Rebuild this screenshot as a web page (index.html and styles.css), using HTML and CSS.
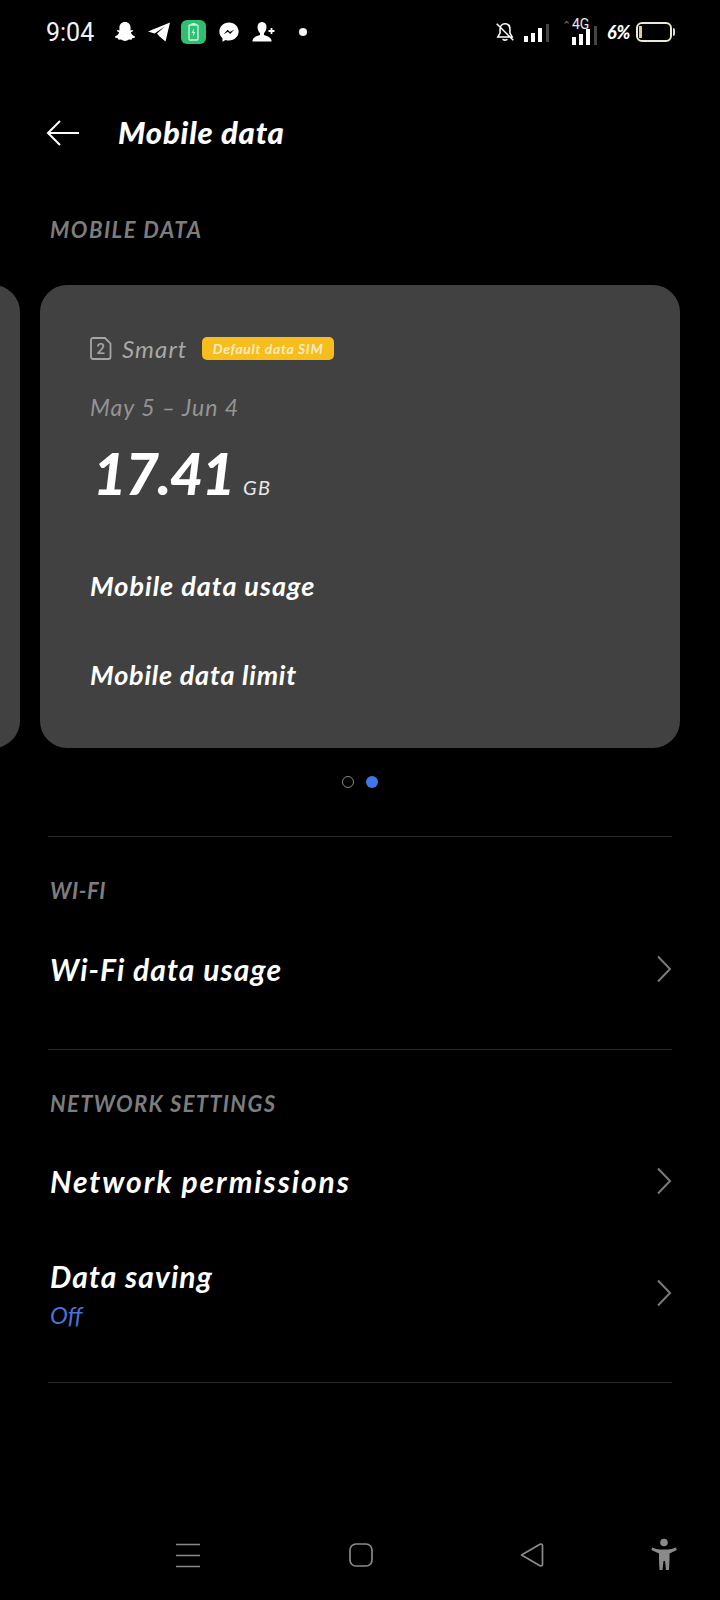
FILE: index.html
```html
<!DOCTYPE html>
<html lang="en">
<head>
<meta charset="utf-8">
<title>Mobile data</title>
<link rel="stylesheet" href="styles.css">
</head>
<body>
<div class="screen">
  <div class="status">
    <div class="status-left">
      <span class="time">9:04</span>
      <svg class="si s-snap" viewBox="0 0 24 24"><path d="M12 2c3.600 0 5.600 2.600 5.600 5.800v2.600l2-.4.6 1-2.400 1.500c.8 2 2.200 3.300 4.200 4l-.3 1.200-2.500.5-.7 1.500-2.500-.2c-1.500.4-2.500 1.500-4 1.500s-2.500-1.100-4-1.500l-2.500.2-.7-1.500-2.500-.5-.3-1.200c2-.7 3.400-2 4.200-4l-2.400-1.500.6-1 2 .4V7.800C6.400 4.600 8.400 2 12 2z" fill="#fff"/></svg>
      <svg class="si s-tele" viewBox="0 0 24 24"><path d="M1 11.500 23 2.500 18.500 21.500 12.500 16.500 10 13.500 18 6.500 7.500 13.500z" fill="#fff"/></svg>
      <span class="bat-app"><svg viewBox="0 0 24 24"><rect x="7.500" y="5" width="9" height="15" rx="1" fill="none" stroke="#cdf5e2" stroke-width="1.300"/><rect x="10" y="3" width="4" height="2" fill="#cdf5e2"/><path d="M12.800 8 10 13h2l-.8 4 2.800-5h-2z" fill="#cdf5e2"/></svg></span>
      <svg class="si s-mess" viewBox="0 0 24 24"><path d="M12 1.500C6 1.500 1.500 5.900 1.500 11.500c0 3 1.300 5.500 3.400 7.300V22.500l3.400-1.900c1.200.4 2.400.6 3.700.6 6 0 10.500-4.300 10.500-9.700S18 1.500 12 1.500z" fill="#fff"/><path d="M6 14.500 10.500 9.500 13 12l4.800-2.800-4.500 5-2.500-2.500z" fill="#000"/></svg>
      <svg class="si s-user" viewBox="0 0 26 24"><path d="M10.500 2c3 0 4.500 2.200 4.500 5 0 2.500-1 4.800-2.500 6v2c2.500 1 7 2 7.500 5.500v1H1v-1C1.500 17 6 16 8.500 15v-2C7 11.800 6 9.500 6 7c0-2.800 1.500-5 4.500-5z" fill="#fff"/><path d="M20 8v6M17 11h6" stroke="#fff" stroke-width="1.800"/></svg>
      <span class="dot"></span>
    </div>
    <div class="status-right">
      <svg class="s-bell" viewBox="0 0 20 20"><path d="M10 2.500c-3 0-4.500 2.300-4.500 5v3.500L3.500 14.500h13L14.500 11V7.500c0-2.700-1.500-5-4.500-5z M8 16.500c.5 1.200 3.500 1.200 4 0 M2.500 2.500l15 15" fill="none" stroke="#fff" stroke-width="1.400"/></svg>
      <svg class="s-sig" viewBox="0 0 30 20"><g fill="#fff"><rect x="2" y="13" width="4" height="6"/><rect x="9" y="10" width="4" height="9"/><rect x="16" y="5" width="4" height="14"/></g><rect x="24" y="1" width="3" height="18" fill="#444"/></svg>
      <span class="net"><span class="net-4g"><span class="net-arrows">⌃</span>4G</span>
        <svg class="s-sig2" viewBox="0 0 30 20"><g fill="#fff"><rect x="2" y="11" width="4" height="8"/><rect x="9" y="8" width="4" height="11"/><rect x="16" y="3" width="4" height="16"/></g><rect x="24" y="0" width="3" height="19" fill="#444"/></svg>
      </span>
      <span class="pct">6%</span>
      <span class="battery"><span class="bat-level"></span></span><span class="bat-tip"></span>
    </div>
  </div>

  <div class="appbar">
    <svg class="back" viewBox="0 0 34 28"><path d="M33 14H2M14 2 2 14l12 12" fill="none" stroke="#fff" stroke-width="2"/></svg>
    <h1 class="title">Mobile data</h1>
  </div>

  <div class="label label-first">MOBILE DATA</div>

  <div class="carousel">
    <div class="peek"></div>
    <div class="card">
      <div class="sim-row">
        <svg class="sim" viewBox="0 0 22 24"><path d="M3 1.500h12L20.500 7v13.500a2 2 0 0 1-2 2H3a2 2 0 0 1-2-2v-17a2 2 0 0 1 2-2z" fill="none" stroke="#a5a5a5" stroke-width="1.800"/><text x="10.800" y="17.500" text-anchor="middle" class="sim-n">2</text></svg>
        <span class="sim-name">Smart</span>
        <span class="badge">Default data SIM</span>
      </div>
      <div class="dates">May 5 – Jun 4</div>
      <div class="usage"><span class="amount">17.41</span><span class="unit">GB</span></div>
      <div class="card-link link-one">Mobile data usage</div>
      <div class="card-link link-two">Mobile data limit</div>
    </div>
  </div>

  <div class="dots"><span class="pg"></span><span class="pg pg-on"></span></div>

  <div class="rule rule-a"></div>
  <div class="label label-wifi">WI-FI</div>
  <div class="row row-wifi"><span class="row-text">Wi-Fi data usage</span><svg class="chev" viewBox="0 0 16 28"><path d="M2 1.500 14 14 2 26.500" fill="none" stroke="#7a7a7a" stroke-width="2"/></svg></div>
  <div class="rule rule-b"></div>
  <div class="label label-net">NETWORK SETTINGS</div>
  <div class="row row-perm"><span class="row-text">Network permissions</span><svg class="chev" viewBox="0 0 16 28"><path d="M2 1.500 14 14 2 26.500" fill="none" stroke="#7a7a7a" stroke-width="2"/></svg></div>
  <div class="row row-save"><span class="row-stack"><span class="row-text">Data saving</span><span class="row-sub">Off</span></span><svg class="chev" viewBox="0 0 16 28"><path d="M2 1.500 14 14 2 26.500" fill="none" stroke="#7a7a7a" stroke-width="2"/></svg></div>
  <div class="rule rule-c"></div>

  <div class="spacer"></div>

  <div class="navbar">
    <svg class="nav-i" viewBox="0 0 26 26"><path d="M1 2.500h24M1 13.500h24M1 24.500h24" stroke="#8a8a8a" stroke-width="1.700"/></svg>
    <svg class="nav-i" viewBox="0 0 26 26"><rect x="2" y="2" width="22" height="22" rx="6" fill="none" stroke="#8a8a8a" stroke-width="1.700"/></svg>
    <svg class="nav-i" viewBox="0 0 26 26"><path d="M2.500 13 21 2.300c1-.5 2.500 0 2.500 1.200v19c0 1.200-1.500 1.700-2.500 1.200z" fill="none" stroke="#8a8a8a" stroke-width="1.700" stroke-linejoin="round"/></svg>
    <svg class="nav-a" viewBox="0 0 26 34"><circle cx="13" cy="4.500" r="3.800" fill="#8a8a8a"/><path d="M1 9.500c3 1 6 2 8 2h8c2 0 5-1 8-2l.8 2.500-7.300 3.500V22l-.5 10h-3l-1-9h-1.500l-1 9h-3L8 22v-6.500L.5 12z" fill="#8a8a8a"/></svg>
  </div>
</div>
</body>
</html>
```
FILE: styles.css
```css
* { box-sizing: border-box; }
html, body { margin: 0; padding: 0; background: #000; }
body { font-family: "Lato", "Open Sans", sans-serif; color: #fff; }
.screen { width: 720px; height: 1600px; display: flex; flex-direction: column; background: #000; overflow: hidden; }

.status { height: 64px; padding: 0 45px 0 46px; display: flex; align-items: center; justify-content: space-between; flex: none; }
.status-left { display: flex; align-items: center; }
.time { font-family: "Roboto", sans-serif; font-size: 25px; color: #f2f2f2; width: 67px; }
.si { display: block; height: 24px; }
.s-snap { width: 24px; }
.s-tele { width: 24px; margin-left: 10px; }
.s-mess { width: 22px; margin-left: 12px; }
.s-user { width: 27px; margin-left: 11px; }
.bat-app { width: 25px; height: 24px; margin-left: 10px; background: #2fbf71; border-radius: 6px; display: flex; }
.bat-app svg { width: 25px; height: 24px; }
.dot { width: 8px; height: 8px; border-radius: 50%; background: #f4f4f4; margin-left: 21px; }
.status-right { display: flex; align-items: center; }
.s-bell { width: 22px; height: 22px; }
.s-sig { width: 30px; height: 20px; margin-left: 6px; margin-top: 2px; }
.net { position: relative; width: 34px; height: 26px; margin-left: 10px; display: block; }
.net-4g { position: absolute; left: 0; top: -3px; font-family: "Roboto", sans-serif; font-size: 14px; color: #e8e8e8; white-space: nowrap; }
.net-arrows { color: #777; font-size: 11px; margin-right: 1px; }
.s-sig2 { position: absolute; left: 8px; top: 7px; width: 30px; height: 20px; }
.pct { font-family: "Lato", sans-serif; font-weight: 900; font-style: italic; font-size: 18px; margin-left: 11px; width: 29px; white-space: nowrap; }
.battery { width: 36px; height: 20px; border: 2px solid #ece9d0; border-radius: 6px; padding: 2px 0 2px 1px; display: flex; }
.bat-level { width: 3px; background: #d9cf8a; }
.bat-tip { width: 2px; height: 8px; background: #ddd; margin-left: 1px; border-radius: 0 2px 2px 0; }

.appbar { height: 72px; padding-left: 46px; margin-top: 33px; display: flex; align-items: center; flex: none; margin-bottom: 46px; }
.back { width: 34px; height: 28px; flex: none; }
.title { margin: -3px 0 0 38px; font-size: 31px; line-height: 40px; font-weight: 900; font-style: italic; letter-spacing: .8px; }

.label { font-size: 22px; font-weight: 700; font-style: italic; color: #7d7d7d; padding-left: 50px; line-height: 28px; letter-spacing: 1.500px; flex: none; }
.label-first { margin-top: 1px; }
.label-wifi { letter-spacing: .6px; }
.label-net { letter-spacing: 1.300px; }

.carousel { display: flex; gap: 20px; margin: 41px 0 0 -620px; flex: none; }
.peek, .card { width: 640px; height: 463px; background: #414141; border-radius: 27px; flex: none; }
.card { padding: 51px 50px 0; }
.sim-row { display: flex; align-items: center; height: 24px; }
.sim { width: 22px; height: 25px; flex: none; }
.sim-n { font-family: "Roboto", sans-serif; font-size: 15px; font-weight: 500; fill: #a5a5a5; }
.sim-name { font-size: 24px; font-style: italic; color: #a8a8a8; margin-left: 10px; letter-spacing: 1.100px; width: 66px; white-space: nowrap; }
.badge { margin-left: 14px; width: 132px; height: 23px; background: #f6bd1c; border-radius: 5px; color: #f7ecc4; font-size: 14px; font-weight: 700; font-style: italic; letter-spacing: .6px; line-height: 23px; text-align: center; white-space: nowrap; }
.dates { margin-top: 31px; font-size: 23px; line-height: 32px; font-style: italic; color: #949494; letter-spacing: 1px; }
.usage { margin-top: 17px; height: 66px; display: flex; align-items: baseline; padding-left: 3px; }
.amount { font-size: 58px; line-height: 66px; font-weight: 900; font-style: italic; letter-spacing: -1.500px; }
.unit { font-size: 20px; font-style: italic; margin-left: 9px; letter-spacing: 1.500px; color: #e8e8e8; }
.card-link { font-size: 27px; line-height: 36px; font-weight: 700; font-style: italic; letter-spacing: 1px; }
.link-one { margin-top: 62px; }
.link-two { margin-top: 53px; letter-spacing: .8px; }

.dots { display: flex; justify-content: center; gap: 12px; margin-top: 28px; flex: none; }
.pg { width: 12px; height: 12px; border-radius: 50%; border: 1px solid #888; }
.pg-on { background: #3f76ea; border: none; }

.rule { height: 1px; background: #2a2a2a; margin: 0 48px; flex: none; }
.rule-a { margin-top: 48px; }
.label-wifi { margin-top: 40px; }
.row { display: flex; align-items: center; justify-content: space-between; padding: 0 48px 0 50px; flex: none; }
.row-text { font-size: 30px; line-height: 40px; font-weight: 700; font-style: italic; letter-spacing: 1.100px; }
.chev { width: 16px; height: 28px; flex: none; }
.row-wifi { height: 78px; margin-top: 25px; }
.rule-b { margin-top: 41px; }
.label-net { margin-top: 40px; }
.row-perm { height: 78px; margin-top: 24px; }
.row-perm .row-text { letter-spacing: 1.900px; }
.row-save { height: 112px; margin-top: 14px; padding-top: 6px; }
.row-stack { display: flex; flex-direction: column; }
.row-sub { font-size: 24px; line-height: 30px; font-style: italic; color: #4a72dc; letter-spacing: 0; margin-top: 4px; }
.rule-c { margin-top: 36px; }
.spacer { flex: 1; }

.navbar { height: 76px; display: flex; align-items: flex-start; padding: 16px 0 0 175px; flex: none; }
.nav-i { width: 26px; height: 26px; margin-right: 147px; flex: none; margin-top: 2px; }
.nav-i:nth-child(2) { margin-right: 145px; }
.nav-i:nth-child(3) { margin-right: 106px; }
.nav-a { width: 26px; height: 34px; flex: none; margin-top: -2px; }
```
